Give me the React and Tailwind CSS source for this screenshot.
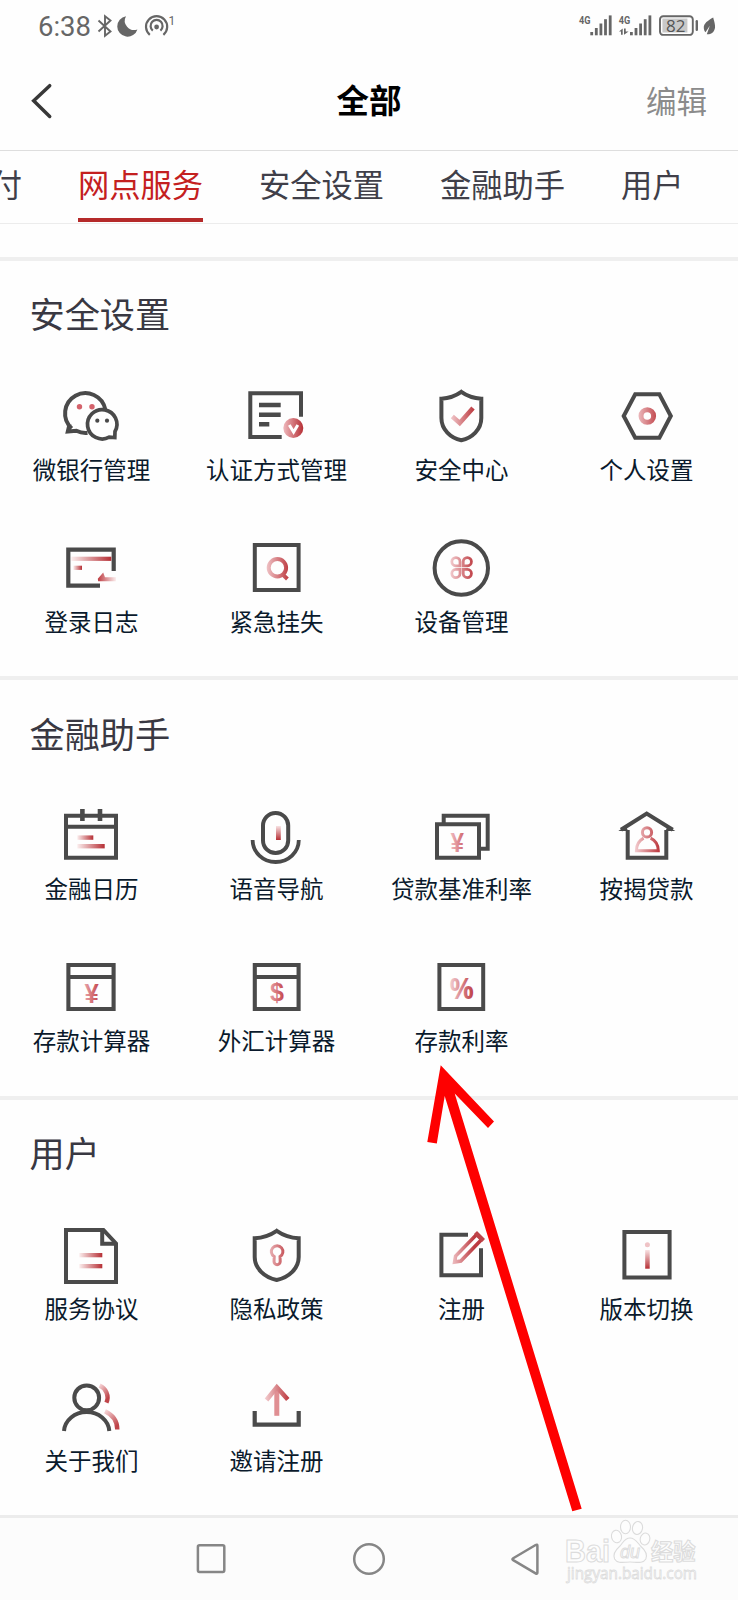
import React from 'react';

const DARK = '#4a4a4a';

function GradientDefs() {
  return (
    <svg width="0" height="0" className="absolute" aria-hidden="true">
      <defs>
        <linearGradient id="across" gradientUnits="userSpaceOnUse" x1="21" y1="0" x2="45" y2="0">
          <stop offset="0" stopColor="#f3cdd0" />
          <stop offset="1" stopColor="#bd3a40" />
        </linearGradient>
        <linearGradient id="glyph" gradientUnits="userSpaceOnUse" x1="22" y1="0" x2="42" y2="0">
          <stop offset="0" stopColor="#efb9bd" />
          <stop offset="1" stopColor="#c0393f" />
        </linearGradient>
        <linearGradient id="bar">
          <stop offset="0" stopColor="#fbeeee" />
          <stop offset="1" stopColor="#b62f35" />
        </linearGradient>
        <linearGradient id="barBack">
          <stop offset="0" stopColor="#bd3a40" />
          <stop offset="1" stopColor="#fbeeee" />
        </linearGradient>
        <linearGradient id="down" x1="0" y1="0" x2="0" y2="1">
          <stop offset="0" stopColor="#f8e2e3" />
          <stop offset="1" stopColor="#b62f35" />
        </linearGradient>
        <linearGradient id="badge">
          <stop offset="0" stopColor="#efb9bd" />
          <stop offset="1" stopColor="#b62f35" />
        </linearGradient>
        <linearGradient id="fall" x1="0" y1="0" x2="0.6" y2="1">
          <stop offset="0" stopColor="#f5d3d5" />
          <stop offset="1" stopColor="#bf4449" />
        </linearGradient>
      </defs>
    </svg>
  );
}

const icons = {
  wechat: (
    <>
      <path d="M12.7 44.4 A20.3 20.3 0 1 1 46.3 25.5 M28.5 48.9 A20.3 20.3 0 0 1 17.4 46.8 L8.8 47.6 L10.6 40" />
      <path d="M50.2 53.2 A14.7 14.7 0 1 1 56 47.5 L55.8 53.6 Z" strokeWidth="3.7" fill="#fff" />
      <g stroke="none">
        <circle cx="20.5" cy="22.7" r="2.7" fill="#d4626b" />
        <circle cx="33" cy="22.7" r="2.7" fill="#d4626b" />
        <circle cx="38.3" cy="36.7" r="2.1" fill={DARK} />
        <circle cx="48" cy="36.7" r="2.1" fill={DARK} />
      </g>
    </>
  ),
  auth: (
    <>
      <path d="M37.7 53 H6.3 V9.3 H57 V32.7" />
      <path d="M15 21 H36.7 M15 30.7 H36.7 M15 40.3 H25.3" strokeWidth="4.4" />
      <circle cx="49.3" cy="44" r="10" fill="url(#badge)" stroke="none" />
      <path d="M45.3 41 L49.6 48 L53.8 41" stroke="#fff" strokeWidth="3" />
    </>
  ),
  shieldCheck: (
    <>
      <path d="M32.3 7.8 C27 11.6 20 14.2 12.4 14.7 V34 C12.4 45.5 21.5 54 32.3 56.3 C43.1 54 52.3 45.5 52.3 34 V14.7 C44.6 14.2 37.6 11.6 32.3 7.8 Z" />
      <path d="M23.3 32.5 L30.7 39 L44 24" stroke="url(#across)" strokeWidth="4.6" />
    </>
  ),
  hexagon: (
    <>
      <path d="M21.2 10.3 H45.4 L56.8 32 L45.4 53.7 H21.2 L9.7 32 Z" />
      <circle cx="33.3" cy="32" r="6.3" stroke="url(#across)" strokeWidth="5" />
    </>
  ),
  log: (
    <>
      <path d="M41 49.7 H9.3 V13.7 H54.7 V35" strokeWidth="4.2" />
      <g stroke="none">
        <rect x="12.3" y="20.7" width="40" height="4.2" fill="url(#bar)" />
        <rect x="14.3" y="29.7" width="8.7" height="4.2" fill="url(#bar)" />
        <path d="M38.8 42.8 L44.2 36.6 L46 41.3 H57 V45.2 H39.2 Z" fill="url(#barBack)" />
      </g>
    </>
  ),
  loss: (
    <>
      <path d="M10.8 9.1 H54.6 V53.9 H10.8 Z" />
      <circle cx="33.4" cy="31.8" r="8.7" stroke="url(#across)" strokeWidth="4" />
      <path d="M38.8 38.6 L43.4 43" stroke="url(#across)" strokeWidth="4" />
    </>
  ),
  device: (
    <>
      <circle cx="32.3" cy="32" r="26.7" />
      <g stroke="url(#across)" strokeWidth="2.8">
        <path d="M31 29.8 H26.8 A4.1 4.1 0 1 1 31 25.7 Z" />
        <path d="M34.2 29.8 H38.4 A4.1 4.1 0 1 0 34.2 25.7 Z" />
        <path d="M31 33.4 H26.8 A4.1 4.1 0 1 0 31 37.5 Z" />
        <path d="M34.2 33.4 H38.4 A4.1 4.1 0 1 1 34.2 37.5 Z" />
      </g>
    </>
  ),
  calendar: (
    <>
      <path d="M7 12.7 H57 V54.7 H7 Z M7 23.8 H57" />
      <path d="M23.4 6 V18 M41 6 V18" strokeWidth="4.6" />
      <g stroke="none" fill="url(#bar)">
        <rect x="18.3" y="32.4" width="16" height="4.4" />
        <rect x="18.3" y="41" width="27.4" height="4.4" />
      </g>
    </>
  ),
  mic: (
    <>
      <rect x="19" y="10" width="25.2" height="40" rx="12.6" />
      <path d="M8.6 37 A23.1 22 0 0 0 54.8 37" strokeWidth="3.8" />
      <rect x="32" y="23" width="4.8" height="14" fill="url(#down)" stroke="none" />
    </>
  ),
  cards: (
    <>
      <path d="M14.7 20 V12.7 H58.7 V45.8 H51" />
      <path d="M8 21.3 H50 V54.7 H8 Z" />
      <text x="21.6" y="48.5" fontSize="27.5" fontWeight="700" fontFamily="Liberation Sans, sans-serif" textLength="13.4" lengthAdjust="spacingAndGlyphs" fill="url(#glyph)" stroke="none">¥</text>
    </>
  ),
  house: (
    <>
      <path d="M13.7 27 V54.7 H52.3 V27" />
      <path d="M7 26.8 L32.7 10.6 L58.7 26.8" />
      <path d="M4.3 28 L12 23 L14 28 Z M61.3 28 L53.6 23 L51.6 28 Z" fill={DARK} stroke="none" />
      <g stroke="url(#across)" strokeWidth="3">
        <circle cx="33" cy="29.4" r="4.6" />
        <path d="M29.6 35.2 C25 37.6 22.4 41.5 22.4 47.8 H44.3 C44.3 41.5 41.5 37.6 36.6 35.2" />
      </g>
    </>
  ),
  yen: (
    <>
      <path d="M9.4 10 H54.6 V54 H9.4 Z M9.4 22 H54.6" strokeWidth="4.1" />
      <text x="25.6" y="48" fontSize="27.5" fontWeight="700" fontFamily="Liberation Sans, sans-serif" textLength="14.2" lengthAdjust="spacingAndGlyphs" fill="url(#glyph)" stroke="none">¥</text>
    </>
  ),
  dollar: (
    <>
      <path d="M10.8 10 H54.6 V54 H10.8 Z M10.8 22 H54.6" strokeWidth="4.1" />
      <text x="33" y="46.3" textAnchor="middle" fontSize="25" fontWeight="700" fontFamily="Liberation Sans, sans-serif" fill="url(#glyph)" stroke="none">$</text>
    </>
  ),
  percent: (
    <>
      <path d="M10.4 10 H54.2 V54 H10.4 Z" />
      <text x="20.6" y="44" fontSize="28.5" fontWeight="700" fontFamily="Open Sans, sans-serif" textLength="24.4" lengthAdjust="spacingAndGlyphs" fill="url(#across)" stroke="none">%</text>
    </>
  ),
  doc: (
    <>
      <path d="M44.4 7 H7 V59 H57 V20.5 Z" />
      <path d="M43.2 7 V20.7 H57" />
      <g stroke="none" fill="url(#bar)">
        <rect x="20.3" y="30" width="23" height="4.3" />
        <rect x="20.3" y="41" width="23" height="4.3" />
      </g>
    </>
  ),
  privacy: (
    <>
      <path d="M32.7 7.8 C26.6 12 19 14.8 10.7 15.2 V34 C10.7 45.5 20.5 54.3 32.7 57 C44.9 54.3 54.7 45.5 54.7 34 V15.2 C46.4 14.8 38.8 12 32.7 7.8 Z" />
      <path d="M30.2 33.6 A5.8 5.8 0 1 1 36 33.6 L36.2 38.6 A3 3 0 0 1 30 38.6 Z" stroke="url(#across)" strokeWidth="3" />
    </>
  ),
  register: (
    <>
      <path d="M39 11.7 H12.4 V52.3 H52 V25.3" />
      <path d="M25.6 39 L26.6 33 L47.6 11.6 L52.6 16.6 L31.8 38 Z" stroke="url(#across)" strokeWidth="3.6" />
      <path d="M48 8 L56 16 L53 19 L45 11 Z" fill="#bd4449" stroke="none" />
    </>
  ),
  version: (
    <>
      <path d="M10.4 9 H55.6 V54.6 H10.4 Z" />
      <g stroke="none">
        <circle cx="33.4" cy="21.8" r="2.5" fill="#efc3c6" />
        <rect x="31.2" y="27" width="4.5" height="18.7" fill="url(#down)" />
      </g>
    </>
  ),
  about: (
    <>
      <circle cx="27.7" cy="22.8" r="12.4" />
      <path d="M5 56 A22.7 20.4 0 0 1 50.3 56" />
      <path d="M40.6 10.4 C46.5 13 50.6 20.5 47.4 27.6" stroke="url(#fall)" strokeWidth="4.4" />
      <path d="M46 36.3 C53.5 39.8 58.3 46.5 58.3 54.5" stroke="url(#fall)" strokeWidth="4.4" />
    </>
  ),
  invite: (
    <>
      <path d="M10.7 36 V49.6 H54.7 V36" strokeWidth="4.2" />
      <path d="M32.8 40.8 V13" stroke="#e08f93" strokeWidth="5" />
      <path d="M22.5 25 L32.8 12.2 L43.8 24.5" stroke="url(#across)" strokeWidth="4.6" />
    </>
  ),
};

function Item({ icon, label }) {
  return (
    <div className="flex w-[185px] flex-col items-center">
      <svg width="65" height="64" viewBox="0 0 65 64" fill="none" stroke={DARK} strokeWidth="4">
        {icons[icon]}
      </svg>
      <span className="mt-[5px] text-[23.5px] leading-8 whitespace-nowrap text-[#0a1a2c]">{label}</span>
    </div>
  );
}

function Section({ title, items, className }) {
  return (
    <section className={`border-t-4 border-[#efefef] ${className}`}>
      <h2 className="pl-[29.5px] text-[35.2px] leading-10 text-[#393842]">{title}</h2>
      <div className="-ml-px grid w-[740px] grid-cols-4 gap-y-[51px]">
        {items.map(([icon, label]) => (
          <Item key={label} icon={icon} label={label} />
        ))}
      </div>
    </section>
  );
}

function StatusBar() {
  return (
    <div className="flex h-[50px] items-start justify-between pr-[22px] pl-[38px] text-[#666]">
      <div className="flex items-start">
        <span className="mt-[11px] w-[59px] font-[Roboto] text-[27.5px] leading-8">6:38</span>
        <svg className="mt-[14px]" width="80" height="24" viewBox="97 14 80 24" fill="none" stroke="#666" strokeWidth="1.9">
          <path d="M98.5 20.5 L110.5 31.5 L105 35.8 V16.2 L110.5 20.5 L98.5 31.5" />
          <path d="M126 16.2 A10.3 10.3 0 1 0 137.4 29.4 A9.3 9.3 0 0 1 126 16.2 Z" fill="#666" stroke="none" />
          <g strokeWidth="2.2">
            <path d="M149.8 34.8 A10.6 10.6 0 1 1 163.4 34.8" />
            <path d="M152.8 30.6 A6 6 0 1 1 160.4 30.6" />
          </g>
          <circle cx="156.6" cy="27" r="2.4" fill="#666" stroke="none" />
          <text x="168.6" y="25" fontSize="12" fontFamily="Roboto, sans-serif" fill="#666" stroke="none">1</text>
        </svg>
      </div>
      <svg className="mt-[14px]" width="138" height="24" viewBox="578 14 138 24" fill="#666">
        <g fontFamily="Roboto, sans-serif" fontWeight="700" fontSize="11.5">
          <text x="579" y="24" textLength="11.5" lengthAdjust="spacingAndGlyphs">4G</text>
          <text x="618.7" y="24" textLength="11.5" lengthAdjust="spacingAndGlyphs">4G</text>
        </g>
        <g id="signal">
          <rect x="590.3" y="32" width="2.8" height="3.3" />
          <rect x="594.9" y="28" width="2.8" height="7.3" />
          <rect x="599.5" y="23.5" width="2.8" height="11.8" />
          <rect x="604.1" y="19.2" width="2.8" height="16.1" />
          <rect x="608.8" y="15.4" width="2.8" height="19.9" />
        </g>
        <use href="#signal" x="39.7" />
        <path d="M619 31.5 L622.7 28.6 V34.8 H621 V31.5 Z M624 28.6 H625.7 V31.5 H628.6 L624 34.8 Z" />
        <rect x="660" y="16.3" width="32.8" height="18.6" rx="3.2" fill="none" stroke="#666" strokeWidth="1.9" />
        <rect x="662.4" y="18.5" width="25" height="14" fill="#c9c9c9" />
        <rect x="695.6" y="20" width="2.4" height="11" rx="1.2" />
        <text x="675.7" y="32" textAnchor="middle" fontSize="17" fontFamily="Open Sans, sans-serif" fill="#555">82</text>
        <path d="M713.2 17.6 C708 20.5 703.5 23.5 703.8 28 C703.9 30 704.6 31.3 705.5 32.2 L709.8 25.8 L706.8 34.3 C712 34.6 715.6 31 715 25.5 C714.7 22.4 713.8 20.4 713.2 17.6 Z" />
      </svg>
    </div>
  );
}

function Header() {
  return (
    <header className="grid h-[101px] grid-cols-3 items-center border-b border-[#dedede] pr-[31px] pl-[31px]">
      <svg width="22" height="38" viewBox="31.5 80.5 22 38" fill="none" stroke="#383838" strokeWidth="3.5" strokeLinecap="round">
        <path d="M50.2 85.2 L34.2 100.3 L50.2 116" />
      </svg>
      <h1 className="-mt-0.5 text-center text-[32.5px] leading-10 font-bold text-black">全部</h1>
      <span className="text-right text-[30.5px] leading-10 text-[#8b8b8b]">编辑</span>
    </header>
  );
}

function Tabs() {
  const tabs = ['付', '网点服务', '安全设置', '金融助手', '用户'];
  return (
    <nav className="flex h-[73px] gap-14 overflow-hidden border-b border-[#ececec]">
      {tabs.map((tab, i) => (
        <div
          key={tab}
          className={`flex h-[71px] shrink-0 flex-col pt-[13px] text-[31.25px] leading-10 whitespace-nowrap ${
            i === 0 ? '-ml-[9.25px]' : ''
          } ${i === 1 ? 'border-b-4 border-[#b52a2a] text-[#c4201f]' : 'text-[#403f49]'}`}
        >
          {tab}
        </div>
      ))}
    </nav>
  );
}

function Watermark() {
  return (
    <svg className="absolute top-[1516px] left-[562px]" width="140" height="74" viewBox="562 1516 140 74" fill="#fdfdfd" stroke="#dcdcdc" strokeWidth="1.1">
      <g fontFamily="Liberation Sans, Noto Sans CJK SC, sans-serif" fontWeight="700">
        <text x="565" y="1561.5" fontSize="31" textLength="45" lengthAdjust="spacingAndGlyphs">Bai</text>
        <text x="651" y="1560" fontSize="22.3">经验</text>
      </g>
      <ellipse cx="625.5" cy="1527" rx="5" ry="6.7" />
      <ellipse cx="637.5" cy="1528" rx="5" ry="6.5" transform="rotate(12 637.5 1528)" />
      <ellipse cx="616.5" cy="1536.5" rx="5" ry="6.3" transform="rotate(-12 616.5 1536.5)" />
      <ellipse cx="645" cy="1539" rx="4.8" ry="6" transform="rotate(14 645 1539)" />
      <path d="M630 1538 C635.5 1538 637.5 1543 641 1546.5 C645.5 1550.5 648 1554 645.8 1559 C643 1564 636 1562 630 1562 C624 1562 617.5 1564 614.6 1559 C612.5 1554 615 1550.5 619.5 1546.5 C623 1543 624.5 1538 630 1538 Z" />
      <text x="630" y="1558" textAnchor="middle" fontSize="18" fontStyle="italic" fontFamily="Liberation Sans, sans-serif" strokeWidth="0.9">du</text>
      <text x="567" y="1578.5" fontSize="16" fontFamily="Open Sans, sans-serif" textLength="130" lengthAdjust="spacingAndGlyphs" strokeWidth="0.8">jingyan.baidu.com</text>
    </svg>
  );
}

function SystemNav() {
  return (
    <footer className="flex h-[85px] items-center justify-center border-t-[3px] border-[#ececec] bg-[#fcfcfc]">
      <svg width="346" height="36" viewBox="196 1541 346 36" fill="none" stroke="#868686" strokeWidth="2.5">
        <rect x="197.9" y="1545.3" width="26.4" height="26.6" rx="1.6" />
        <circle cx="369" cy="1559" r="14.8" />
        <path d="M537.4 1545.8 V1572.6 Q537.4 1574.4 535.6 1573.4 L513.2 1560.2 Q511.6 1559.2 513.2 1558.2 L535.6 1545 Q537.4 1544 537.4 1545.8 Z" />
      </svg>
    </footer>
  );
}

export default function App() {
  return (
    <div className="relative h-[1600px] w-[738px] overflow-hidden bg-[#fefefe] font-['Noto_Sans_CJK_SC',sans-serif]">
      <GradientDefs />
      <StatusBar />
      <Header />
      <Tabs />
      <main className="pt-[33px]">
        <Section
          className="h-[419px] pt-8 [&>h2]:mb-[51px]"
          title="安全设置"
          items={[
            ['wechat', '微银行管理'],
            ['auth', '认证方式管理'],
            ['shieldCheck', '安全中心'],
            ['hexagon', '个人设置'],
            ['log', '登录日志'],
            ['loss', '紧急挂失'],
            ['device', '设备管理'],
          ]}
        />
        <Section
          className="h-[420px] pt-[33px] [&>h2]:mb-[50px]"
          title="金融助手"
          items={[
            ['calendar', '金融日历'],
            ['mic', '语音导航'],
            ['cards', '贷款基准利率'],
            ['house', '按揭贷款'],
            ['yen', '存款计算器'],
            ['dollar', '外汇计算器'],
            ['percent', '存款利率'],
          ]}
        />
        <Section
          className="h-[419px] pt-8 [&>h2]:mb-[51px]"
          title="用户"
          items={[
            ['doc', '服务协议'],
            ['privacy', '隐私政策'],
            ['register', '注册'],
            ['version', '版本切换'],
            ['about', '关于我们'],
            ['invite', '邀请注册'],
          ]}
        />
      </main>
      <SystemNav />
      <svg className="absolute top-[1060px] left-[420px]" width="170" height="456" viewBox="420 1060 170 456" fill="#fe0000">
        <path d="M440.7 1065.3 L494 1121.5 L488 1128 L454.7 1093.5 L581.7 1508.8 L572.3 1511.2 L444.7 1096 L436.8 1143.6 L427.3 1142 Z" />
      </svg>
      <Watermark />
    </div>
  );
}
